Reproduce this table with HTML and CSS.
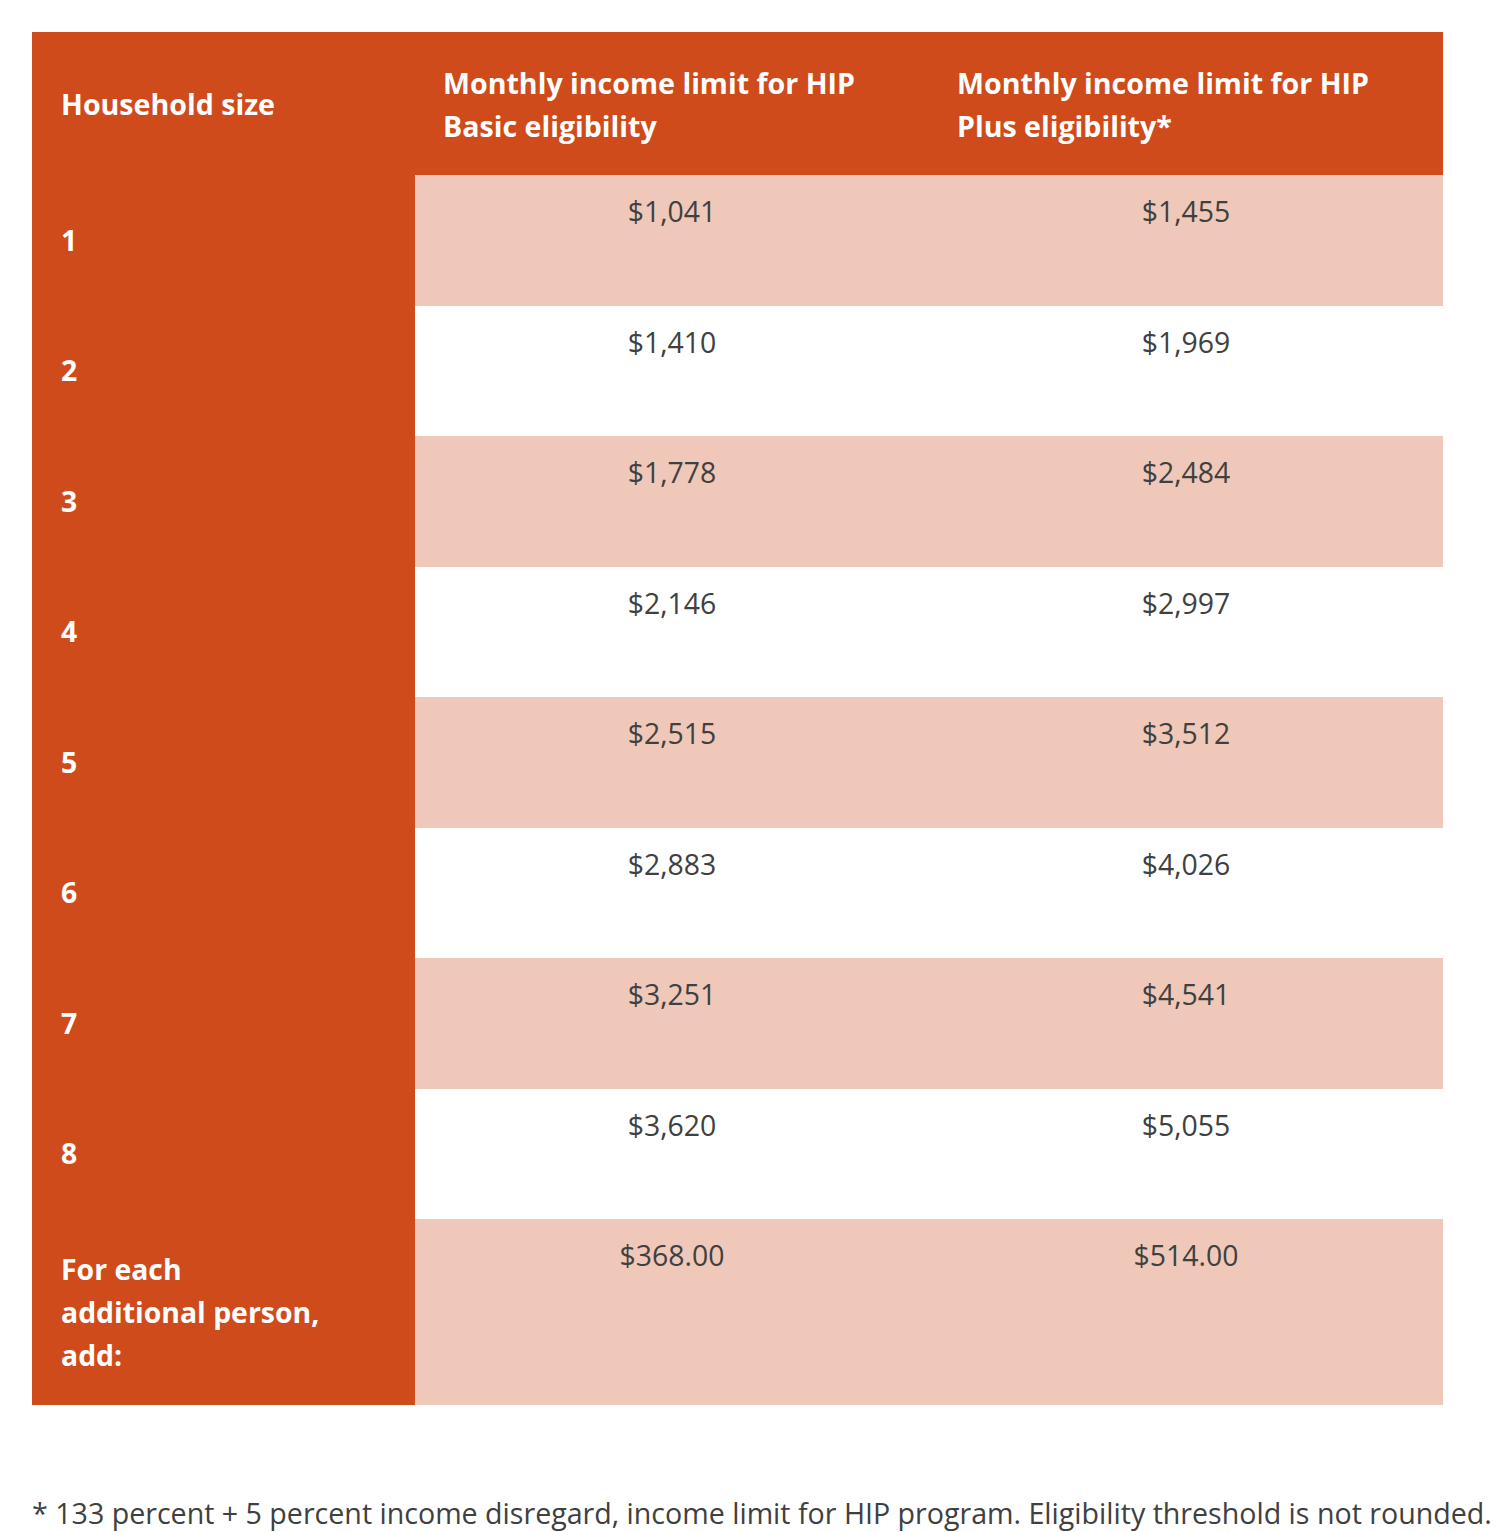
FILE: index.html
```html
<!DOCTYPE html>
<html lang="en">
<head>
<meta charset="utf-8">
<title>HIP income limits</title>
<link rel="stylesheet" href="styles.css">
</head>
<body>
<div class="page">
  <table class="limits">
    <thead>
      <tr class="head-row">
        <th class="col-size">Household size</th>
        <th class="col-val">Monthly income limit for HIP Basic eligibility</th>
        <th class="col-val">Monthly income limit for HIP Plus eligibility*</th>
      </tr>
    </thead>
    <tbody>
      <tr class="row odd"><th>1</th><td>$1,041</td><td>$1,455</td></tr>
      <tr class="row"><th>2</th><td>$1,410</td><td>$1,969</td></tr>
      <tr class="row odd"><th>3</th><td>$1,778</td><td>$2,484</td></tr>
      <tr class="row"><th>4</th><td>$2,146</td><td>$2,997</td></tr>
      <tr class="row odd"><th>5</th><td>$2,515</td><td>$3,512</td></tr>
      <tr class="row"><th>6</th><td>$2,883</td><td>$4,026</td></tr>
      <tr class="row odd"><th>7</th><td>$3,251</td><td>$4,541</td></tr>
      <tr class="row"><th>8</th><td>$3,620</td><td>$5,055</td></tr>
      <tr class="row odd last"><th>For each<br>additional person,<br>add:</th><td>$368.00</td><td>$514.00</td></tr>
    </tbody>
  </table>
  <p class="note">* 133 percent + 5 percent income disregard, income limit for HIP program. Eligibility threshold is not rounded.</p>
</div>
</body>
</html>
```

FILE: styles.css
```css
html, body {
  margin: 0;
  padding: 0;
  background: #ffffff;
}

.page {
  padding: 32px 0 0 32px;
  font-family: "Open Sans", "Liberation Sans", sans-serif;
}

.limits {
  border-collapse: collapse;
  table-layout: fixed;
  width: 1411px;
}

.limits th,
.limits td {
  padding: 0;
  font-size: 28.4px;
  line-height: 43px;
}

.head-row th {
  background: #cf4b1b;
  color: #ffffff;
  font-weight: 700;
  font-size: 28.6px;
  text-align: left;
  vertical-align: middle;
  height: 143px;
  padding: 0 28px;
  box-sizing: border-box;
}

.head-row .col-size {
  width: 383px;
  padding-left: 29px;
}

.row {
  height: 130.5px;
}

.row.last {
  height: 186px;
}

.row th {
  background: #cf4b1b;
  color: #ffffff;
  font-weight: 700;
  text-align: left;
  vertical-align: middle;
  padding-left: 29px;
}

.row td {
  background: #ffffff;
  color: #404040;
  font-weight: 400;
  text-align: center;
  vertical-align: top;
  padding-top: 15px;
}

.row.odd td {
  background: #f0c8ba;
}

.note {
  margin: 88px 0 0 0;
  font-size: 28.6px;
  line-height: 40px;
  color: #404040;
  white-space: nowrap;
}
```
